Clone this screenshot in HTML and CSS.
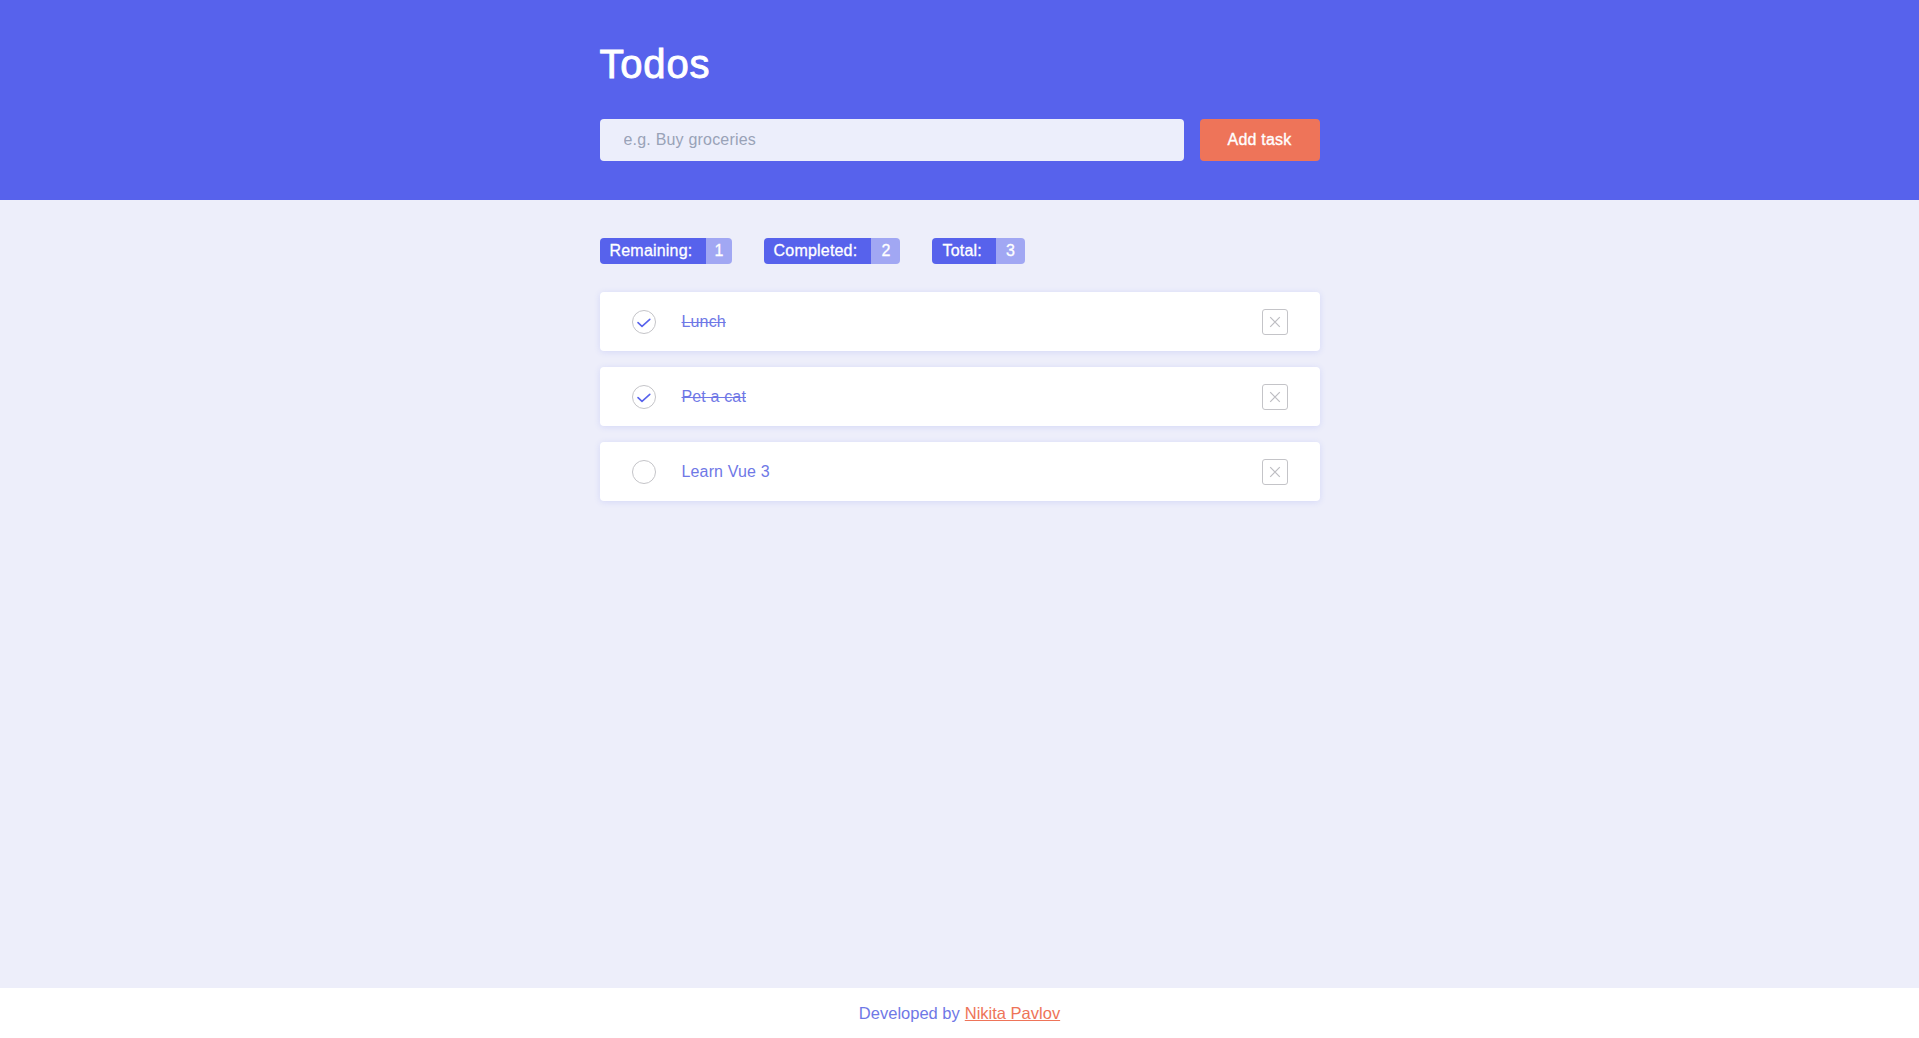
FILE: index.html
```html
<!DOCTYPE html>
<html lang="en">
<head>
<meta charset="utf-8">
<title>Todos</title>
<link rel="stylesheet" href="styles.css">
</head>
<body>
<div class="app">
  <header class="header">
    <div class="container">
      <h1 class="title">Todos</h1>
      <form class="add-form">
        <input class="add-input" type="text" placeholder="e.g. Buy groceries">
        <button class="add-btn" type="button">Add task</button>
      </form>
    </div>
  </header>
  <main class="main">
    <div class="container">
      <div class="stats">
        <div class="badge"><span class="badge-label">Remaining:</span><span class="badge-num narrow">1</span></div>
        <div class="badge"><span class="badge-label">Completed:</span><span class="badge-num">2</span></div>
        <div class="badge"><span class="badge-label">Total:</span><span class="badge-num">3</span></div>
      </div>
      <ul class="list">
        <li class="item done">
          <svg class="check" width="24" height="24" viewBox="0 0 24 24"><circle cx="12" cy="12" r="11.5" fill="none" stroke="#c4c4c8" stroke-width="1"/><path d="M6 12.6 L10 16.3 L17.8 9.4" fill="none" stroke="#5762ec" stroke-width="1.6" stroke-linecap="round" stroke-linejoin="round"/></svg>
          <span class="item-text">Lunch</span>
          <button class="remove" type="button"><svg width="24" height="24" viewBox="0 0 24 24"><path d="M7.2 7.2 L16.8 16.8 M16.8 7.2 L7.2 16.8" stroke="#bdbdc2" stroke-width="1.2" fill="none"/></svg></button>
        </li>
        <li class="item done">
          <svg class="check" width="24" height="24" viewBox="0 0 24 24"><circle cx="12" cy="12" r="11.5" fill="none" stroke="#c4c4c8" stroke-width="1"/><path d="M6 12.6 L10 16.3 L17.8 9.4" fill="none" stroke="#5762ec" stroke-width="1.6" stroke-linecap="round" stroke-linejoin="round"/></svg>
          <span class="item-text">Pet a cat</span>
          <button class="remove" type="button"><svg width="24" height="24" viewBox="0 0 24 24"><path d="M7.2 7.2 L16.8 16.8 M16.8 7.2 L7.2 16.8" stroke="#bdbdc2" stroke-width="1.2" fill="none"/></svg></button>
        </li>
        <li class="item">
          <svg class="check" width="24" height="24" viewBox="0 0 24 24"><circle cx="12" cy="12" r="11.5" fill="none" stroke="#c4c4c8" stroke-width="1"/></svg>
          <span class="item-text">Learn Vue 3</span>
          <button class="remove" type="button"><svg width="24" height="24" viewBox="0 0 24 24"><path d="M7.2 7.2 L16.8 16.8 M16.8 7.2 L7.2 16.8" stroke="#bdbdc2" stroke-width="1.2" fill="none"/></svg></button>
        </li>
      </ul>
    </div>
  </main>
  <footer class="footer">
    Developed by <a class="footer-link" href="#">Nikita Pavlov</a>
  </footer>
</div>
</body>
</html>
```
FILE: styles.css
```css
* { box-sizing: border-box; }
html, body { margin: 0; padding: 0; height: 100%; }
body {
  font-family: "Liberation Sans", Arial, sans-serif;
  font-size: 16px;
  background: #edeefa;
  color: #6f78e6;
}
.app {
  min-height: 100vh;
  display: flex;
  flex-direction: column;
}
.container {
  width: 720px;
  margin: 0 auto;
}
.header {
  background: #5762ec;
  padding: 40px 0 39px;
}
.title {
  margin: 0 0 31px;
  font-size: 40px;
  line-height: 48px;
  font-weight: 400;
  letter-spacing: 0.8px;
  color: #ffffff;
  -webkit-text-stroke: 0.9px #ffffff;
}
.add-form {
  display: flex;
  gap: 16px;
  margin: 0;
}
.add-input {
  flex: 1;
  height: 42px;
  border: none;
  border-radius: 4px;
  background: #eceefb;
  padding: 0 24px;
  font-family: inherit;
  font-size: 16px;
  letter-spacing: 0.2px;
  color: #333;
  outline: none;
}
.add-input::placeholder { color: #99a2b7; }
.add-btn {
  width: 120px;
  height: 42px;
  border: none;
  border-radius: 4px;
  background: #ee7459;
  color: #ffffff;
  font-family: inherit;
  font-size: 16px;
  letter-spacing: 0.2px;
  -webkit-text-stroke: 0.35px #ffffff;
  padding: 0;
}
.main {
  flex: 1;
  padding-top: 38px;
}
.stats {
  display: flex;
  gap: 32px;
  margin-bottom: 28px;
}
.badge {
  display: flex;
  height: 26px;
  border-radius: 4px;
  overflow: hidden;
  color: #ffffff;
  line-height: 26px;
  letter-spacing: 0.2px;
  -webkit-text-stroke: 0.3px #ffffff;
}
.badge-label {
  background: #5762ec;
  padding: 0 14px 0 10px;
}
.badge-num {
  background: #a1a7f3;
  padding: 0 10px;
}
.badge-num.narrow { padding: 0 8px; }
.list {
  list-style: none;
  margin: 0;
  padding: 0;
  display: flex;
  flex-direction: column;
  gap: 16px;
}
.item {
  display: flex;
  align-items: center;
  height: 59px;
  padding: 0 32px;
  background: #ffffff;
  border-radius: 4px;
  box-shadow: 0 1px 6px rgba(87, 98, 236, 0.16);
}
.check { flex: none; display: block; }
.item-text {
  margin-left: 26px;
  flex: 1;
  letter-spacing: 0.15px;
  color: #6f78e6;
}
.item.done .item-text { text-decoration: line-through; }
.remove {
  width: 26px;
  height: 26px;
  padding: 0;
  border: 1px solid #c4c4c8;
  border-radius: 3px;
  background: #ffffff;
  display: flex;
  align-items: center;
  justify-content: center;
}
.remove svg { display: block; }
.footer {
  background: #ffffff;
  height: 50px;
  display: flex;
  align-items: center;
  justify-content: center;
  font-size: 16.5px;
  color: #6f78e6;
}
.footer-link {
  color: #ee7459;
  margin-left: 5px;
}
```
